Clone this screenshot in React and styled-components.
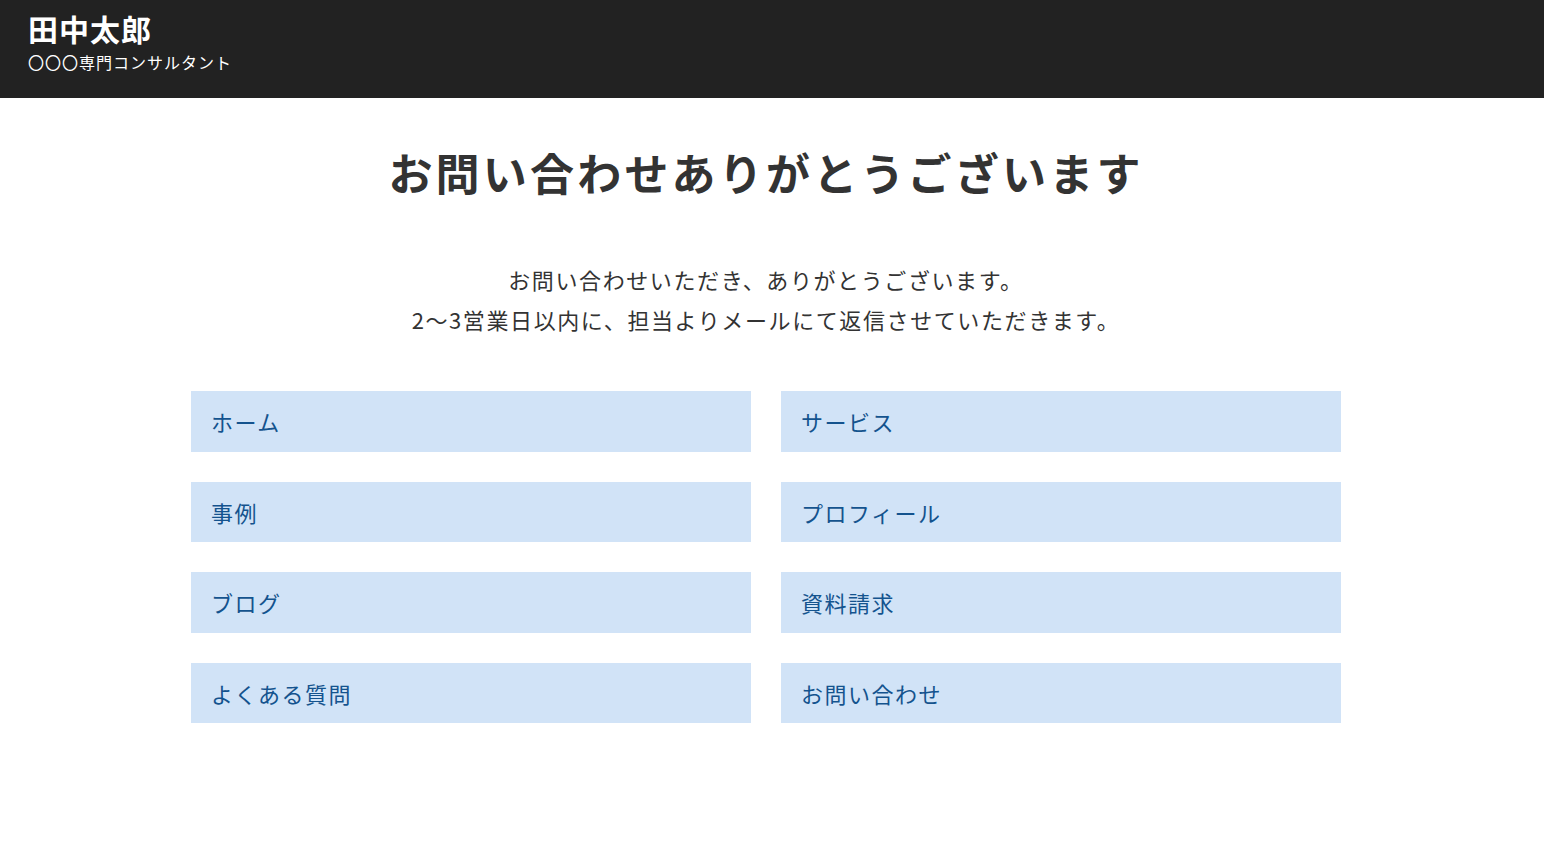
import styled, { createGlobalStyle } from 'styled-components';

const GlobalStyle = createGlobalStyle`
  html, body {
    margin: 0;
    padding: 0;
    background: #fff;
  }
  body {
    font-family: "Noto Sans CJK JP", "Noto Sans", sans-serif;
    color: #333;
  }
  * {
    box-sizing: border-box;
  }
`

const links = [
  'ホーム',
  'サービス',
  '事例',
  'プロフィール',
  'ブログ',
  '資料請求',
  'よくある質問',
  'お問い合わせ',
]

export default function App() {
  return (
    <>
      <GlobalStyle />
      <Header>
        <SiteName>田中太郎</SiteName>
        <Tagline>〇〇〇専門コンサルタント</Tagline>
      </Header>

      <Main>
        <Title>お問い合わせありがとうございます</Title>
        <Message>
          お問い合わせいただき、ありがとうございます。
          <br />
          2〜3営業日以内に、担当よりメールにて返信させていただきます。
        </Message>

        <LinkGrid>
          {links.map((label) => (
            <LinkItem key={label} href="#">
              {label}
            </LinkItem>
          ))}
        </LinkGrid>
      </Main>
    </>
  )
}

const Header = styled.header`
  display: flex;
  flex-direction: column;
  height: 98px;
  padding: 10px 28px 0;
  background-color: #222;
  color: #fff;
`
const SiteName = styled.h1`
  margin: 0;
  font-size: 30px;
  font-weight: bold;
  line-height: 36px;
  letter-spacing: 1px;
`
const Tagline = styled.p`
  margin: 4px 0 0;
  font-size: 16px;
  line-height: 24px;
  letter-spacing: 1px;
`
const Main = styled.main`
  display: flex;
  flex-direction: column;
  align-items: center;
  padding: 0 12px 120px 0;
`
const Title = styled.h2`
  margin: 42px 0 0;
  font-size: 44px;
  font-weight: bold;
  line-height: 64px;
  letter-spacing: 3.2px;
  color: #333;
`
const Message = styled.p`
  margin: 55px 0 0;
  font-size: 22px;
  line-height: 40px;
  letter-spacing: 1.6px;
  text-align: center;
  color: #333;
`
const LinkGrid = styled.nav`
  display: grid;
  grid-template-columns: 560px 560px;
  column-gap: 30px;
  row-gap: 30px;
  margin-top: 52px;
`
const LinkItem = styled.a`
  display: flex;
  align-items: center;
  height: 60.5px;
  padding: 0 20px;
  background-color: #d1e3f7;
  color: #14538e;
  font-size: 22px;
  letter-spacing: 1.5px;
  text-decoration: none;
`
